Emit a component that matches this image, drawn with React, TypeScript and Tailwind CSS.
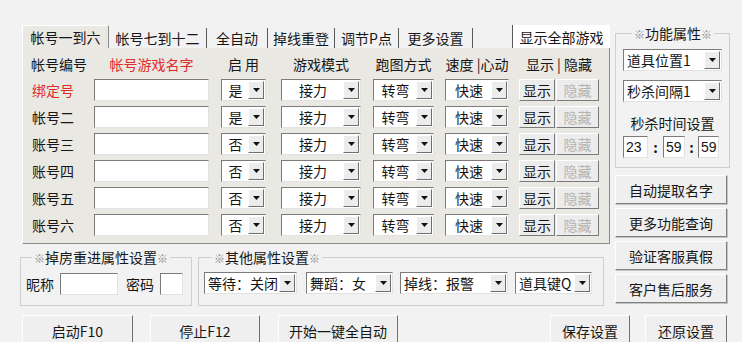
import React from 'react';

const FONT = { fontFamily: '"Noto Sans CJK SC", "Liberation Sans", sans-serif' };

function Arrow() {
  return (
    <span className="flex h-full w-[16px] shrink-0 items-center justify-center border border-t-white border-l-white border-r-[#6f6f6f] border-b-[#6f6f6f] bg-[#ececec]">
      <svg width="7" height="4" viewBox="0 0 7 4">
        <path d="M0 0h7L3.5 4z" fill="#111" />
      </svg>
    </span>
  );
}

function Combo({ w, text, center }: { w: string; text: string; center?: boolean }) {
  return (
    <div className={`${w} flex h-[22px] shrink-0 items-stretch border border-t-[#7b7b7b] border-l-[#7b7b7b] border-r-[#e2e2e2] border-b-[#e2e2e2] bg-white p-px`}>
      <span className={`flex flex-1 items-center whitespace-nowrap ${center ? 'justify-center' : 'pl-[2px]'}`}>{text}</span>
      <Arrow />
    </div>
  );
}

function Field({ w, text }: { w: string; text?: string }) {
  return (
    <div className={`${w} flex h-[22px] shrink-0 items-center border border-t-[#7b7b7b] border-l-[#7b7b7b] border-r-[#e2e2e2] border-b-[#e2e2e2] bg-white pl-[2px] font-['Liberation_Sans'] text-[14px]`}>
      {text}
    </div>
  );
}

function Btn({ w, children, disabled }: { w: string; children: React.ReactNode; disabled?: boolean }) {
  return (
    <div className={`${w} flex h-[22px] shrink-0 items-center justify-center border border-t-white border-l-white border-r-[#7a7a7a] border-b-[#7a7a7a] bg-[#ececec] ${disabled ? 'text-[#b4b4b4]' : ''}`}>
      {children}
    </div>
  );
}

function BigBtn({ children }: { children: React.ReactNode }) {
  return (
    <div className="flex h-[29px] w-[112px] items-center justify-center border border-t-white border-l-white border-r-[#808080] border-b-[#808080] bg-[#efefef] shadow-[1px_1px_0_#c4c4c4]">
      {children}
    </div>
  );
}

const Mark = () => <span className="text-[11px] text-[#8a8a8a]">※</span>;

const rows = [
  { name: '绑定号', on: '是', red: true },
  { name: '帐号二', on: '是' },
  { name: '账号三', on: '否' },
  { name: '账号四', on: '否' },
  { name: '账号五', on: '否' },
  { name: '账号六', on: '否' },
];

const tabs = [
  { label: '帐号七到十二', w: 'w-[98px]' },
  { label: '全自动', w: 'w-[61px]' },
  { label: '掉线重登', w: 'w-[67px]' },
  { label: '调节P点', w: 'w-[64px]' },
  { label: '更多设置', w: 'w-[74px]' },
];

export default function App() {
  return (
    <div className="h-[342px] w-[742px] overflow-hidden bg-[#f2f2f2] text-[14px] leading-none text-[#161616]" style={FONT}>
      <div className="flex pt-[24px]">
        {/* 左侧 */}
        <div className="ml-[20px] w-[592px]">
          <div className="ml-[2px] flex h-[24px] items-end">
            <div className="flex h-[23px] w-[87px] items-center justify-center border-t border-l border-r border-t-white border-l-white border-r-[#8a8a8a] bg-[#eae8e3]">
              帐号一到六
            </div>
            {tabs.map((t) => (
              <div key={t.label} className={`${t.w} flex h-[20px] items-center justify-center border-r border-r-[#5a5a5a]`}>
                {t.label}
              </div>
            ))}
            <div className="ml-[39px] flex h-[23px] w-[98px] items-center justify-center border-l border-l-[#5a5a5a] bg-white">
              显示全部游戏
            </div>
          </div>

          <div className="ml-[2px] w-[588px] border-l border-r border-b border-l-white border-r-[#8a8a8a] border-b-[#8a8a8a] bg-[#eae8e3] pt-[4px] pb-[5px]">
            <div className="flex h-[24px] items-center">
              <div className="w-[71px] pl-[8px]">帐号编号</div>
              <div className="w-[115px] text-center text-[#e02c2c]">帐号游戏名字</div>
              <div className="ml-[12px] w-[45px] text-center">启 用</div>
              <div className="ml-[15px] w-[80px] text-center">游戏模式</div>
              <div className="ml-[12px] w-[61px] text-center">跑图方式</div>
              <div className="ml-[11px] w-[64px] whitespace-nowrap text-center">速度 |心动</div>
              <div className="ml-[10px] w-[80px] whitespace-nowrap text-center">显示 | 隐藏</div>
            </div>
            {rows.map((r) => (
              <div key={r.name} className="flex h-[27px] items-center">
                <div className={`w-[71px] pl-[9px] ${r.red ? 'text-[#e02c2c]' : ''}`}>{r.name}</div>
                <Field w="w-[115px]" />
                <div className="ml-[12px]"><Combo w="w-[45px]" text={r.on} center /></div>
                <div className="ml-[15px]"><Combo w="w-[80px]" text="接力" center /></div>
                <div className="ml-[12px]"><Combo w="w-[61px]" text="转弯" center /></div>
                <div className="ml-[11px]"><Combo w="w-[64px]" text="快速" center /></div>
                <div className="ml-[10px]"><Btn w="w-[36px]">显示</Btn></div>
                <div className="ml-[1px]"><Btn w="w-[43px]" disabled>隐藏</Btn></div>
              </div>
            ))}
          </div>

          <div className="mt-[5px] flex">
            <fieldset className="h-[57px] w-[172px] border border-[#cfcfcf] px-[5px]">
              <legend className="ml-[6px] px-[2px] leading-[16px]"><Mark />掉房重进属性设置<Mark /></legend>
              <div className="mt-[7px] flex items-center">
                <span>昵称</span>
                <div className="ml-[6px]"><Field w="w-[58px]" /></div>
                <span className="ml-[8px]">密码</span>
                <div className="ml-[6px]"><Field w="w-[23px]" /></div>
              </div>
            </fieldset>
            <fieldset className="ml-[6px] h-[57px] w-[406px] border border-[#cfcfcf] px-[5px]">
              <legend className="ml-[8px] px-[2px] leading-[16px]"><Mark />其他属性设置<Mark /></legend>
              <div className="mt-[6px] flex items-center">
                <Combo w="w-[93px]" text="等待：关闭" />
                <div className="ml-[9px]"><Combo w="w-[87px]" text="舞蹈：女" /></div>
                <div className="ml-[7px]"><Combo w="w-[108px]" text="掉线：报警" /></div>
                <div className="ml-[7px]"><Combo w="w-[77px]" text="道具键Q" /></div>
              </div>
            </fieldset>
          </div>
        </div>

        {/* 右侧 */}
        <div className="ml-[3px] mt-[1px] w-[112px]">
          <fieldset className="h-[143px] w-[112px] border border-[#cfcfcf] px-[7px]">
            <legend className="ml-[9px] px-[2px] leading-[16px]"><Mark />功能属性<Mark /></legend>
            <div className="mt-[7px]"><Combo w="w-[99px]" text="道具位置1" /></div>
            <div className="mt-[9px]"><Combo w="w-[99px]" text="秒杀间隔1" /></div>
            <div className="mt-[11px] flex h-[20px] items-center justify-center">秒杀时间设置</div>
            <div className="mt-[3px] flex items-center">
              <Field w="w-[25px]" text="23" />
              <span className="w-[15px] text-center font-bold">:</span>
              <Field w="w-[22px]" text="59" />
              <span className="w-[13px] text-center font-bold">:</span>
              <Field w="w-[21px]" text="59" />
            </div>
          </fieldset>
          <div className="mt-[7px] flex flex-col gap-[4px]">
            <BigBtn>自动提取名字</BigBtn>
            <BigBtn>更多功能查询</BigBtn>
            <BigBtn>验证客服真假</BigBtn>
            <BigBtn>客户售后服务</BigBtn>
          </div>
        </div>
      </div>

      {/* 底部按钮 */}
      <div className="mt-[9px] flex">
        <div className="ml-[22px] flex h-[30px] w-[111px] items-center justify-center border-t border-l border-r border-t-white border-l-white border-r-[#6f6f6f] bg-[#efefef]">启动F10</div>
        <div className="ml-[17px] flex h-[30px] w-[110px] items-center justify-center border-t border-l border-r border-t-white border-l-white border-r-[#6f6f6f] bg-[#efefef]">停止F12</div>
        <div className="ml-[18px] flex h-[30px] w-[120px] items-center justify-center border-t border-l border-r border-t-white border-l-white border-r-[#6f6f6f] bg-[#efefef]">开始一键全自动</div>
        <div className="ml-[152px] flex h-[30px] w-[80px] items-center justify-center border-t border-l border-r border-t-white border-l-white border-r-[#6f6f6f] bg-[#efefef]">保存设置</div>
        <div className="ml-[15px] flex h-[30px] w-[82px] items-center justify-center border-t border-l border-r border-t-white border-l-white border-r-[#6f6f6f] bg-[#efefef]">还原设置</div>
      </div>
    </div>
  );
}
